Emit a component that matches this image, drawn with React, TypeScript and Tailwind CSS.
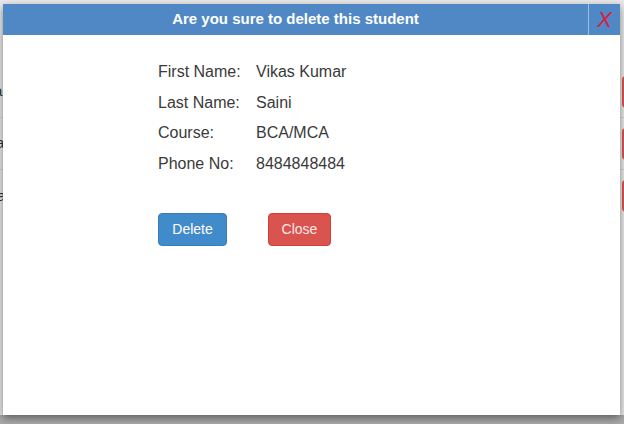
import { FC, ReactElement } from "react";

const student = [
  { label: "First Name:", value: "Vikas Kumar" },
  { label: "Last Name:", value: "Saini" },
  { label: "Course:", value: "BCA/MCA" },
  { label: "Phone No:", value: "8484848484" },
];

const App: FC = (): ReactElement => {
  return (
    <div
      className="relative h-[424px] w-[624px] overflow-hidden bg-[#e9e9e9]"
      style={{ fontFamily: '"Liberation Sans", Arial, sans-serif' }}
    >
      {/* page behind the modal */}
      <div className="flex h-full flex-col pt-[66px] text-[15px] text-[#333]">
        <div className="flex h-[52px] items-center justify-between border-b border-[#d6d6d6]">
          <span className="-ml-[6px]">ai</span>
          <span className="mr-[-30px] h-[32px] w-[32px] rounded bg-[#d9534f]"></span>
        </div>
        <div className="flex h-[52px] items-center justify-between border-b border-[#d6d6d6]">
          <span className="-ml-[4px]">ar</span>
          <span className="mr-[-30px] h-[32px] w-[32px] rounded bg-[#d9534f]"></span>
        </div>
        <div className="flex h-[52px] items-center justify-between">
          <span className="-ml-[6px]">ia</span>
          <span className="mr-[-30px] h-[32px] w-[32px] rounded bg-[#d9534f]"></span>
        </div>
        <div className="flex-1"></div>
        <div className="h-[9px] bg-[#a9a9a9]"></div>
      </div>

      {/* modal */}
      <div className="absolute left-[3px] top-[4px] flex h-[411px] w-[617px] flex-col bg-white shadow-[0_3px_8px_rgba(0,0,0,0.45)]">
        <div className="flex h-[31px] bg-[#5088c5]">
          <h4 className="flex flex-1 items-center justify-center text-[15px] font-bold text-white">
            Are you sure to delete this student
          </h4>
          <button className="flex w-[32px] items-center justify-center border-l border-[#9dbce0] text-[22px] italic text-[#d4213d]">
            X
          </button>
        </div>
        <div className="flex flex-col pl-[155px] pt-[22px]">
          <ul className="flex flex-col text-[16px] text-[#3a3a3a]">
            {student.map((row) => (
              <li key={row.label} className="flex h-[30.5px] items-center">
                <span className="w-[98px]">{row.label}</span>
                <span>{row.value}</span>
              </li>
            ))}
          </ul>
          <div className="mt-[34px] flex gap-[41px]">
            <button className="h-[33px] w-[69px] rounded border border-[#357ebd] bg-[#428bca] text-[14px] text-white">
              Delete
            </button>
            <button className="h-[33px] w-[63px] rounded border border-[#d43f3a] bg-[#d9534f] text-[14px] text-[#fde8e8]">
              Close
            </button>
          </div>
        </div>
      </div>
    </div>
  );
};

export default App;
